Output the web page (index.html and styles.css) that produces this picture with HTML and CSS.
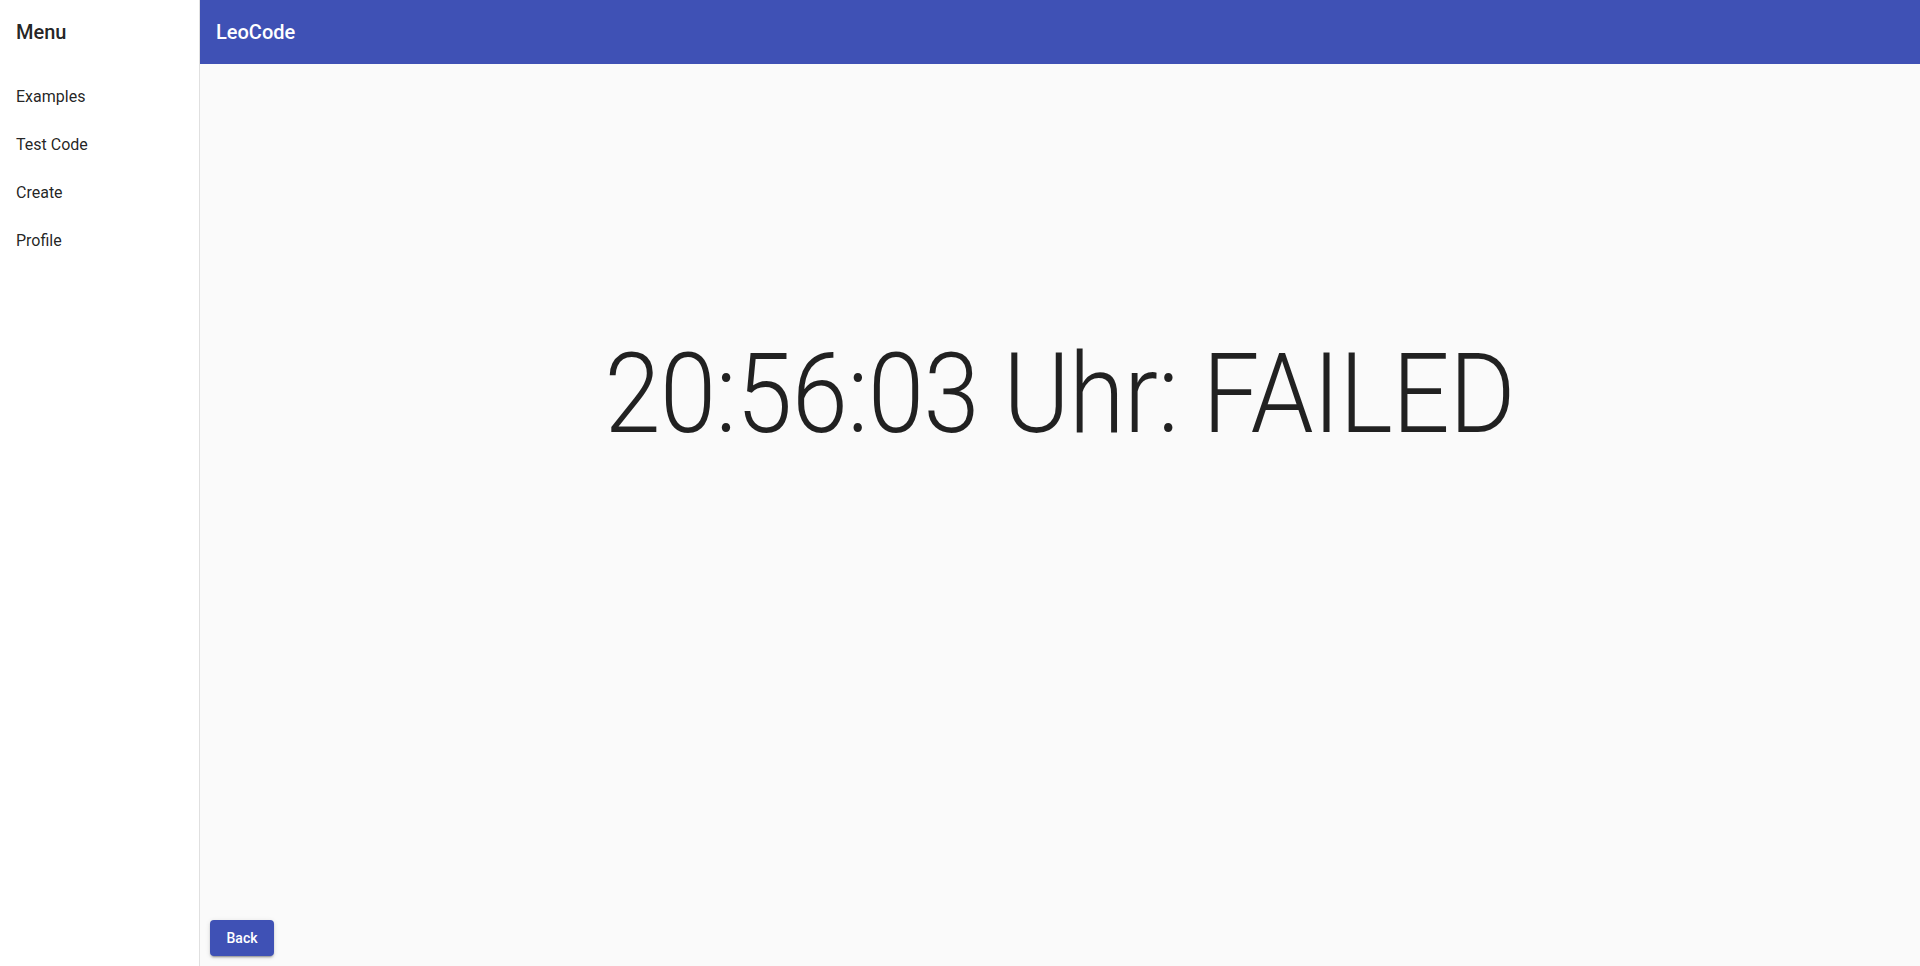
FILE: index.html
```html
<!DOCTYPE html>
<html lang="de">
<head>
<meta charset="utf-8">
<title>LeoCode</title>
<link rel="stylesheet" href="styles.css">
</head>
<body>
<div class="app">
  <aside class="sidenav">
    <div class="sidenav-title">Menu</div>
    <nav class="nav-list">
      <a class="nav-item">Examples</a>
      <a class="nav-item">Test Code</a>
      <a class="nav-item">Create</a>
      <a class="nav-item">Profile</a>
    </nav>
  </aside>
  <div class="main">
    <header class="toolbar">LeoCode</header>
    <section class="content">
      <div class="result">
        <h1 class="display">20:56:03 Uhr: FAILED</h1>
      </div>
      <div class="actions">
        <button class="btn">Back</button>
      </div>
    </section>
  </div>
</div>
</body>
</html>
```

FILE: styles.css
```css
* { box-sizing: border-box; }
html, body {
  margin: 0;
  height: 100%;
}
body {
  font-family: Roboto, "Helvetica Neue", sans-serif;
  color: rgba(0, 0, 0, 0.87);
  background: #fafafa;
}
.app {
  display: flex;
  height: 100vh;
}
.sidenav {
  width: 200px;
  flex: 0 0 200px;
  background: #fff;
  border-right: 1px solid rgba(0, 0, 0, 0.12);
}
.sidenav-title {
  height: 64px;
  display: flex;
  align-items: center;
  padding: 0 16px;
  font-size: 20px;
  font-weight: 500;
}
.nav-list {
  display: flex;
  flex-direction: column;
  padding-top: 8px;
}
.nav-item {
  height: 48px;
  display: flex;
  align-items: center;
  padding: 0 16px;
  font-size: 16px;
  color: rgba(0, 0, 0, 0.87);
}
.main {
  flex: 1;
  display: flex;
  flex-direction: column;
  min-width: 0;
}
.toolbar {
  height: 64px;
  flex: 0 0 64px;
  background: #3f51b5;
  color: #fff;
  display: flex;
  align-items: center;
  padding: 0 16px;
  font-size: 20px;
  font-weight: 500;
}
.content {
  flex: 1;
  display: flex;
  flex-direction: column;
  background: #fafafa;
}
.result {
  flex: 1;
  padding-top: 274px;
  text-align: center;
}
.display {
  display: inline-block;
  margin: 0;
  font-size: 112px;
  line-height: 112px;
  font-weight: 300;
  letter-spacing: -0.005em;
  color: rgba(0, 0, 0, 0.87);
  transform: scaleX(0.902);
}
.actions {
  padding: 0 10px 10px;
}
.btn {
  font-family: Roboto, "Helvetica Neue", sans-serif;
  font-size: 14px;
  font-weight: 500;
  height: 36px;
  min-width: 64px;
  padding: 0 16px;
  border: none;
  border-radius: 4px;
  background: #3f51b5;
  color: #fff;
  box-shadow: 0 3px 1px -2px rgba(0,0,0,.2), 0 2px 2px 0 rgba(0,0,0,.14), 0 1px 5px 0 rgba(0,0,0,.12);
}
```
